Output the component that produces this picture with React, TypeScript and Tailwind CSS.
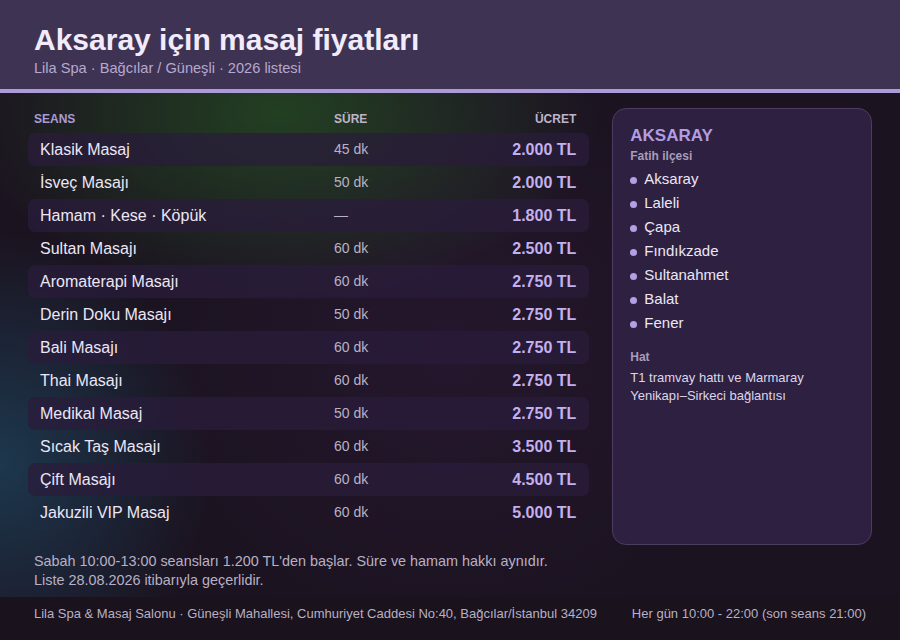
import React from 'react';

const rows = [
  { name: 'Klasik Masaj', dur: '45 dk', price: '2.000 TL' },
  { name: 'İsveç Masajı', dur: '50 dk', price: '2.000 TL' },
  { name: 'Hamam · Kese · Köpük', dur: '—', price: '1.800 TL' },
  { name: 'Sultan Masajı', dur: '60 dk', price: '2.500 TL' },
  { name: 'Aromaterapi Masajı', dur: '60 dk', price: '2.750 TL' },
  { name: 'Derin Doku Masajı', dur: '50 dk', price: '2.750 TL' },
  { name: 'Bali Masajı', dur: '60 dk', price: '2.750 TL' },
  { name: 'Thai Masajı', dur: '60 dk', price: '2.750 TL' },
  { name: 'Medikal Masaj', dur: '50 dk', price: '2.750 TL' },
  { name: 'Sıcak Taş Masajı', dur: '60 dk', price: '3.500 TL' },
  { name: 'Çift Masajı', dur: '60 dk', price: '4.500 TL' },
  { name: 'Jakuzili VIP Masaj', dur: '60 dk', price: '5.000 TL' },
];

const areas = ['Aksaray', 'Laleli', 'Çapa', 'Fındıkzade', 'Sultanahmet', 'Balat', 'Fener'];

export default function App() {
  return (
    <div className="w-[900px] h-[640px] flex flex-col bg-[#1b1320] font-['Liberation_Sans',Arial,sans-serif] overflow-hidden">
      {/* Header */}
      <header className="h-[93px] shrink-0 bg-[#3f3354] border-b-4 border-[#ad9ad8] px-[34px] pt-[21px]">
        <h1 className="text-[30px] leading-[37px] font-bold text-[#f1ebfb]">Aksaray için masaj fiyatları</h1>
        <p className="text-[14.6px] leading-[18px] text-[#b6a9cf] mt-[1px]">Lila Spa · Bağcılar / Güneşli · 2026 listesi</p>
      </header>

      {/* Body */}
      <main className="flex-1 flex flex-col bg-[#1b1320] bg-[image:radial-gradient(ellipse_320px_190px_at_280px_20px,rgba(40,100,35,0.55),transparent),radial-gradient(ellipse_210px_230px_at_0px_370px,rgba(30,85,115,0.55),transparent),radial-gradient(ellipse_320px_300px_at_450px_260px,rgba(55,30,70,0.35),transparent)]">
        <div className="flex gap-[23px] px-[28px] pt-[15px]">
          {/* Price table */}
          <section className="w-[562px]">
            <div className="grid grid-cols-[300px_1fr_auto] pl-[6px] pr-[13px] mt-[1px] h-[20px] items-center text-[12px] font-bold">
              <span className="text-[#a99bd6]">SEANS</span>
              <span className="text-[#bdb4cc]">SÜRE</span>
              <span className="text-[#bdb4cc] text-right">ÜCRET</span>
            </div>
            <div className="mt-[4px]">
              {rows.map((r, i) => (
                <div
                  key={r.name}
                  className={`grid grid-cols-[294px_1fr_auto] items-center h-[33px] pl-[12px] pr-[13px] rounded-[7px] ${
                    i % 2 === 0 ? 'bg-[#2a1c3b]/75' : ''
                  }`}
                >
                  <span className="text-[16px] text-[#ece6f5]">{r.name}</span>
                  <span className="text-[14px] text-[#b9b2c4]">{r.dur}</span>
                  <span className="text-[16px] font-bold text-[#c3b0ee] text-right">{r.price}</span>
                </div>
              ))}
            </div>
          </section>

          {/* Neighbourhood card */}
          <aside className="w-[260px] h-[437px] rounded-[14px] bg-[#2e2040] border border-[#4b3c60] px-[17px] pt-[16px]">
            <h2 className="text-[17px] leading-[22px] font-bold text-[#b19de0]">AKSARAY</h2>
            <p className="text-[12px] leading-[16px] font-bold text-[#a89cbb] mt-[1px]">Fatih ilçesi</p>
            <ul className="mt-[3px]">
              {areas.map((a) => (
                <li key={a} className="flex items-center h-[24px] text-[15px] text-[#ece6f5]">
                  <span className="w-[7px] h-[7px] rounded-full bg-[#b39fe3] mr-[7px] mt-[2px]" />
                  {a}
                </li>
              ))}
            </ul>
            <p className="text-[12px] leading-[16px] font-bold text-[#a89cbb] mt-[14px]">Hat</p>
            <p className="text-[13px] leading-[18px] text-[#ddd5ea] mt-[4px]">
              T1 tramvay hattı ve Marmaray
              <br />
              Yenikapı–Sirkeci bağlantısı
            </p>
          </aside>
        </div>

        <div className="px-[34px] mt-auto pb-[7px] text-[14.4px] leading-[19px] text-[#b8b0c4]">
          <p>Sabah 10:00-13:00 seansları 1.200 TL'den başlar. Süre ve hamam hakkı aynıdır.</p>
          <p>Liste 28.08.2026 itibarıyla geçerlidir.</p>
        </div>
      </main>

      {/* Footer */}
      <footer className="h-[43px] shrink-0 bg-[#1a121d] flex items-start justify-between px-[34px] pt-[9px] text-[13px] leading-[16px] text-[#b8b0c4]">
        <span>Lila Spa &amp; Masaj Salonu · Güneşli Mahallesi, Cumhuriyet Caddesi No:40, Bağcılar/İstanbul 34209</span>
        <span>Her gün 10:00 - 22:00 (son seans 21:00)</span>
      </footer>
    </div>
  );
}
